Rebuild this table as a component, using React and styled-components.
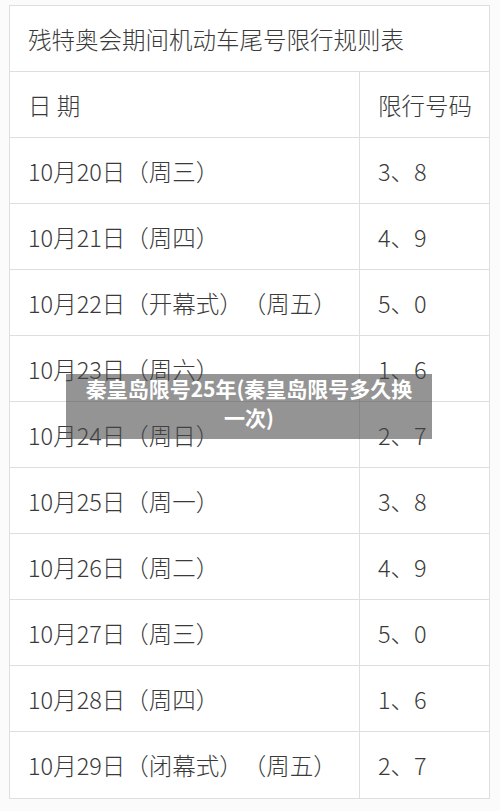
import styled, { createGlobalStyle } from 'styled-components';

const GlobalStyle = createGlobalStyle`
  html, body {
    margin: 0;
    padding: 0;
    background: #fbfbfb;
  }
  body {
    font-family: "Noto Sans CJK SC", "Noto Sans", sans-serif;
  }
`;

const rows = [
  ['10月20日（周三）', '3、8'],
  ['10月21日（周四）', '4、9'],
  ['10月22日（开幕式）\u3000（周五）', '5、0'],
  ['10月23日（周六）', '1、6'],
  ['10月24日（周日）', '2、7'],
  ['10月25日（周一）', '3、8'],
  ['10月26日（周二）', '4、9'],
  ['10月27日（周三）', '5、0'],
  ['10月28日（周四）', '1、6'],
  ['10月29日（闭幕式）\u3000（周五）', '2、7'],
];

const App = () => {
  return (
    <>
      <GlobalStyle />
      <Page>
        <Table>
          <TitleRow>残特奥会期间机动车尾号限行规则表</TitleRow>
          <Row>
            <DateCell>日 期</DateCell>
            <NumCell>限行号码</NumCell>
          </Row>
          {rows.map(([date, nums], i) => (
            <Row key={i} $last={i === rows.length - 1}>
              <DateCell>{date}</DateCell>
              <NumCell>{nums}</NumCell>
            </Row>
          ))}
        </Table>
        <Caption>
          秦皇岛限号25年(秦皇岛限号多久换
          <br />
          一次)
        </Caption>
      </Page>
    </>
  );
};

const Page = styled.div`
  position: relative;
  width: 500px;
  height: 811px;
  padding: 5px 0 0 9px;
  box-sizing: border-box;
  overflow: hidden;
`;

const Table = styled.div`
  width: 481px;
  background: #fff;
  border: 1.5px solid #dedede;
  box-sizing: border-box;
  display: flex;
  flex-direction: column;
  color: #3a3a3a;
  font-size: 23.5px;
  font-weight: 300;
`;

const TitleRow = styled.div`
  height: 66px;
  display: flex;
  align-items: center;
  padding-left: 18px;
  border-bottom: 1.5px solid #dedede;
  box-sizing: border-box;
`;

const Row = styled.div`
  height: 66px;
  display: grid;
  grid-template-columns: 350px 1fr;
  border-bottom: ${(p) => (p.$last ? 'none' : '1.5px solid #dedede')};
  box-sizing: border-box;
`;

const DateCell = styled.div`
  display: flex;
  align-items: center;
  padding-left: 18px;
  border-right: 1.5px solid #dedede;
  white-space: pre;
`;

const NumCell = styled.div`
  display: flex;
  align-items: center;
  padding-left: 18px;
`;

const Caption = styled.div`
  position: absolute;
  left: 66px;
  top: 374px;
  width: 366px;
  height: 65px;
  background: rgba(70, 70, 70, 0.58);
  color: #fff;
  font-weight: 700;
  font-size: 21px;
  line-height: 29px;
  text-align: center;
  box-sizing: border-box;
`;

export default App;
